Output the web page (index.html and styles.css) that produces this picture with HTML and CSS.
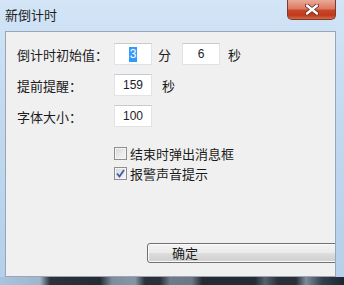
FILE: index.html
```html
<!DOCTYPE html>
<html lang="zh-CN">

<head>
    <meta charset="UTF-8">
    <title>新倒计时</title>
    <link rel="stylesheet" href="styles.css">
</head>

<body>
    <div class="window">
        <div class="titlebar">
            <span class="title">新倒计时</span>
            <div class="close-btn">
                <svg width="14" height="11" viewBox="0 0 14 11">
                    <path d="M2 1.5 L12 9.5 M12 1.5 L2 9.5" stroke="#5a2a24" stroke-width="4" stroke-linecap="round"/>
                    <path d="M2 1.5 L12 9.5 M12 1.5 L2 9.5" stroke="#ffffff" stroke-width="2.4" stroke-linecap="round"/>
                </svg>
            </div>
        </div>

        <div class="frame-middle">
            <div class="client">
                <div class="row">
                    <span class="label">倒计时初始值：</span>
                    <div class="textbox"><span class="sel">3</span></div>
                    <span class="unit">分</span>
                    <div class="textbox textbox-second">6</div>
                    <span class="unit unit-second">秒</span>
                </div>
                <div class="row">
                    <span class="label">提前提醒：</span>
                    <div class="textbox">159</div>
                    <span class="unit unit-wide">秒</span>
                </div>
                <div class="row">
                    <span class="label">字体大小：</span>
                    <div class="textbox">100</div>
                </div>

                <div class="checks">
                    <div class="check">
                        <span class="check-box"></span>
                        <span>结束时弹出消息框</span>
                    </div>
                    <div class="check">
                        <span class="check-box">
                            <svg width="11" height="11" viewBox="0 0 11 11">
                                <path d="M2 5.5 L4.5 8.5 L9 2" fill="none" stroke="#3a5fa8" stroke-width="1.8"/>
                            </svg>
                        </span>
                        <span>报警声音提示</span>
                    </div>
                </div>

                <div class="actions">
                    <div class="btn">确定</div>
                </div>
            </div>
        </div>

        <div class="frame-bottom"></div>
    </div>
</body>

</html>
```

FILE: styles.css
```css
html, body {
  margin: 0;
  padding: 0;
}
body {
  font-family: "Noto Sans CJK SC", "Liberation Sans", sans-serif;
  font-size: 13px;
  color: #1b1b1b;
}
.window {
  width: 344px;
  height: 285px;
  overflow: hidden;
  display: flex;
  flex-direction: column;
  background: linear-gradient(180deg, #d3e5f7 0%, #c2d9f0 40%, #b5cfea 100%);
}

/* title bar */
.titlebar {
  height: 31px;
  flex: none;
  display: flex;
  align-items: flex-start;
}
.title {
  padding-left: 5px;
  line-height: 30px;
  color: #1e1e1e;
}
.close-btn {
  margin-left: auto;
  margin-right: 8px;
  width: 49px;
  height: 20px;
  box-sizing: border-box;
  border: 1px solid #7a3a30;
  border-top: none;
  border-radius: 0 0 5px 5px;
  background: linear-gradient(180deg, #e9a997 0%, #dc7a62 45%, #c8452a 55%, #c0391d 80%, #d46a45 100%);
  display: flex;
  align-items: center;
  justify-content: center;
}

/* client area */
.frame-middle {
  flex: 1;
  padding: 0 8px 0 5px;
  display: flex;
}
.client {
  flex: 1;
  background: #f0f0f0;
  border: 1px solid #98a6b6;
  padding: 11px 0 0 11px;
  overflow: hidden;
}
.row {
  display: flex;
  align-items: center;
  height: 22px;
  margin-bottom: 9px;
}
.label {
  width: 97px;
  flex: none;
}
.textbox {
  width: 38px;
  height: 22px;
  box-sizing: border-box;
  background: #ffffff;
  border: 1px solid #dfe4ea;
  border-top-color: #c4cbd4;
  font-family: "Liberation Sans", "DejaVu Sans", sans-serif;
  font-size: 12px;
  display: flex;
  align-items: center;
  justify-content: center;
  color: #222;
}
.sel {
  background: #3399ff;
  color: #ffffff;
  padding: 1px 1px;
  line-height: 13px;
}
.unit {
  margin-left: 6px;
}
.unit-wide {
  margin-left: 10px;
}
.textbox-second {
  margin-left: 11px;
}
.unit-second {
  margin-left: 8px;
}

/* check boxes */
.checks {
  margin: 20px 0 0 97px;
  display: flex;
  flex-direction: column;
  gap: 7px;
}
.check {
  display: flex;
  align-items: center;
  height: 13px;
  gap: 3px;
}
.check-box {
  width: 13px;
  height: 13px;
  box-sizing: border-box;
  border: 1px solid #8e8f8f;
  background: linear-gradient(135deg, #d6d6d6 0%, #ececec 60%, #f6f6f6 100%);
  box-shadow: inset 0 0 0 1px #f4f4f4;
  display: flex;
  align-items: center;
  justify-content: center;
}

/* button */
.actions {
  margin: 63px 0 0 130px;
}
.btn {
  width: 210px;
  height: 20px;
  box-sizing: border-box;
  border: 1px solid #707070;
  border-radius: 3px;
  background: linear-gradient(180deg, #f4f4f4 0%, #ebebeb 48%, #dddddd 52%, #cfcfcf 100%);
  box-shadow: inset 0 0 0 1px #fbfbfb;
  padding-left: 24px;
  line-height: 18px;
}

/* bottom edge, blurred taskbar behind */
.frame-bottom {
  height: 8px;
  flex: none;
  background: linear-gradient(90deg,
    #a9c4df 0px, #9fb6cc 40px, #2c323b 50px, #262b33 100px,
    #7e8c9c 112px, #8796a6 135px, #2a3039 145px, #2a3039 160px,
    #6f7b88 170px, #6c7885 192px, #262b33 202px, #262b33 255px,
    #56616d 265px, #2a2f37 278px, #2a2f37 296px, #7d8b9a 306px,
    #33404e 322px, #1f252d 344px);
}
```
